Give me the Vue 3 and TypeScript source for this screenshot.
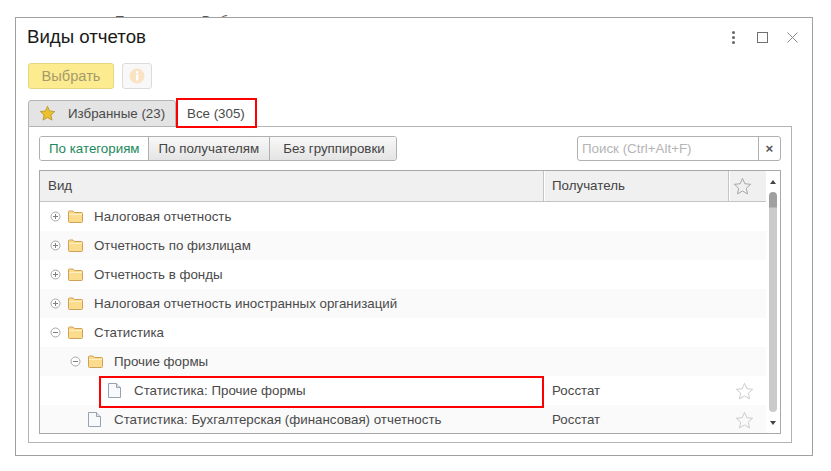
<script setup lang="ts">
type Row = {
  title: string
  level: number
  kind: 'closed' | 'open' | 'doc'
  recipient?: string
}

const rows: Row[] = [
  { title: 'Налоговая отчетность', level: 0, kind: 'closed' },
  { title: 'Отчетность по физлицам', level: 0, kind: 'closed' },
  { title: 'Отчетность в фонды', level: 0, kind: 'closed' },
  { title: 'Налоговая отчетность иностранных организаций', level: 0, kind: 'closed' },
  { title: 'Статистика', level: 0, kind: 'open' },
  { title: 'Прочие формы', level: 1, kind: 'open' },
  { title: 'Статистика: Прочие формы', level: 2, kind: 'doc', recipient: 'Росстат' },
  { title: 'Статистика: Бухгалтерская (финансовая) отчетность', level: 1, kind: 'doc', recipient: 'Росстат' },
]

const starPath = 'M10 1.5l2.5 5.6 6.1.6-4.6 4.1 1.3 6-5.3-3.1-5.3 3.1 1.3-6L1.400 7.700l6.100-.6z'
</script>

<template>
  <div class="page">
    <div class="behind">Показывать Выбрать</div>
    <div class="window">
      <div class="titlebar">
        <h1 class="title">Виды отчетов</h1>
        <div class="window-actions">
          <span class="dots"><i></i><i></i><i></i></span>
          <span class="maximize"></span>
          <svg class="close" width="11" height="11" viewBox="0 0 11 11">
            <path d="M.5.500l10 10M10.500.500l-10 10" stroke="#8a8a8a" fill="none" />
          </svg>
        </div>
      </div>

      <div class="toolbar">
        <button class="select-btn">Выбрать</button>
        <button class="info-btn">
          <svg width="16" height="16" viewBox="0 0 16 16">
            <circle cx="8" cy="8" r="7.500" fill="#fae3c3" />
            <rect x="7" y="3" width="2.400" height="2.400" fill="#fff" />
            <rect x="7" y="6.500" width="2.400" height="6" fill="#fff" />
          </svg>
        </button>
      </div>

      <div class="tabs">
        <div class="tab tab-fav">
          <svg width="17" height="17" viewBox="0 0 20 20">
            <path :d="starPath" fill="#eac02c" stroke="#b8952a" />
          </svg>
          <span>Избранные (23)</span>
        </div>
        <div class="tab tab-all">Все (305)</div>
      </div>

      <div class="panel">
        <div class="filters">
          <div class="group">
            <span class="seg seg-active">По категориям</span>
            <span class="seg">По получателям</span>
            <span class="seg seg-last">Без группировки</span>
          </div>
          <div class="search">
            <span class="search-text">Поиск (Ctrl+Alt+F)</span>
            <span class="search-clear">×</span>
          </div>
        </div>

        <div class="table">
          <div class="table-main">
            <div class="head">
              <div class="col-name head-cell head-text">Вид</div>
              <div class="col-recipient head-cell head-text">Получатель</div>
              <div class="col-star head-cell">
                <svg width="19" height="19" viewBox="0 0 20 20">
                  <path :d="starPath" fill="none" stroke="#a3a3a3" />
                </svg>
              </div>
            </div>
            <div
              v-for="(row, i) in rows"
              :key="row.title"
              class="row"
              :class="{ odd: i % 2 === 1 }"
            >
              <div class="col-name cell" :style="{ paddingLeft: `${10 + row.level * 20}px` }">
                <svg v-if="row.kind !== 'doc'" class="toggle" width="11" height="11" viewBox="0 0 11 11">
                  <circle cx="5.500" cy="5.500" r="4.500" fill="#fff" stroke="#a8a8a8" />
                  <path d="M3 5.500h5" stroke="#808080" />
                  <path v-if="row.kind === 'closed'" d="M5.500 3v5" stroke="#808080" />
                </svg>
                <svg v-if="row.kind !== 'doc'" class="folder" width="15" height="13" viewBox="0 0 15 13">
                  <path
                    d="M.5 11.500V2q0-1 1-1h3.500l1.500 1.500h7q1 0 1 1v8q0 1-1 1h-12q-1 0-1-1z"
                    fill="#fbdc8c"
                    stroke="#d0a05a"
                  />
                  <path d="M1 4.500h13" stroke="#fff0c4" />
                </svg>
                <svg v-else class="doc" width="13" height="15" viewBox="0 0 13 15">
                  <path d="M.5.500h8l4 4v10H.5z" fill="#f7f9fb" stroke="#97a2b0" />
                  <path d="M8.500.500v4h4" fill="#dfe4ea" stroke="#97a2b0" />
                </svg>
                <span class="row-title">{{ row.title }}</span>
              </div>
              <div class="col-recipient cell row-recipient">{{ row.recipient }}</div>
              <div class="col-star cell row-star">
                <svg v-if="row.recipient" width="19" height="19" viewBox="0 0 20 20">
                  <path :d="starPath" fill="none" stroke="#c8c8c8" />
                </svg>
              </div>
            </div>
            <div class="row-mark"></div>
          </div>
          <div class="scrollbar">
            <span class="arrow arrow-up"></span>
            <div class="track"><div class="thumb"></div></div>
            <span class="arrow arrow-down"></span>
          </div>
        </div>
      </div>

      <div class="tab-mark"></div>
    </div>
  </div>
</template>

<style scoped>
.page {
  position: relative;
  width: 831px;
  height: 471px;
  padding: 17px 0 0 15px;
  box-sizing: border-box;
  overflow: hidden;
  background: #fff;
  font-family: "Liberation Sans", Arial, sans-serif;
  font-size: 13.33px;
  color: #4a4a4a;
}

.behind {
  position: absolute;
  left: 115px;
  top: 13px;
  color: #555;
  word-spacing: 10px;
}

.window {
  position: relative;
  width: 798px;
  height: 439px;
  box-sizing: border-box;
  border: 1px solid #a0a0a0;
  background: #fff;
  padding: 0 21px 0 12px;
}

.titlebar {
  display: flex;
  align-items: center;
  justify-content: space-between;
  height: 38px;
  margin-left: -1px;
  margin-right: -7px;
}

.title {
  margin: 0;
  font-size: 18.67px;
  font-weight: 400;
  color: #1a1a1a;
}

.window-actions {
  display: flex;
  align-items: center;
}

.dots {
  display: flex;
  flex-direction: column;
  gap: 2px;
  margin-right: 22px;
}

.dots i {
  display: block;
  width: 3px;
  height: 3px;
  background: #666;
  border-radius: 50%;
}

.maximize {
  width: 9px;
  height: 9px;
  border: 1px solid #707070;
  margin-right: 19px;
}

.toolbar {
  display: flex;
  gap: 8px;
  margin-top: 7px;
}

.select-btn {
  width: 86px;
  height: 26px;
  padding: 0;
  border: 1px solid #e6d67e;
  border-radius: 3px;
  background: #fdeb8f;
  color: #a39b6c;
  font: inherit;
  font-size: 14.67px;
  font-weight: 400;
}

.info-btn {
  display: flex;
  align-items: center;
  justify-content: center;
  width: 30px;
  height: 26px;
  padding: 0;
  border: 1px solid #dcdcdc;
  border-radius: 3px;
  background: #f8f8f8;
}

.tabs {
  display: flex;
  height: 28px;
  margin-top: 10px;
  margin-bottom: -1px;
  position: relative;
  z-index: 1;
}

.tab {
  display: flex;
  align-items: center;
  box-sizing: border-box;
  height: 28px;
}

.tab-fav {
  gap: 12px;
  width: 148px;
  height: 27px;
  margin-top: 1px;
  padding-left: 10px;
  background: #e4e4e4;
  border: 1px solid #b4b4b4;
  border-radius: 3px 3px 0 0;
}

.tab-all {
  width: 81px;
  padding-left: 11px;
  background: #fff;
}

.panel {
  box-sizing: border-box;
  width: 764px;
  height: 317px;
  border: 1px solid #b4b4b4;
  padding: 9px 10px 0;
}

.filters {
  display: flex;
  justify-content: space-between;
  height: 25px;
}

.group {
  display: flex;
  box-sizing: border-box;
  height: 25px;
  border: 1px solid #b0b0b0;
  border-radius: 3px;
  overflow: hidden;
}

.seg {
  display: flex;
  align-items: center;
  padding: 0 10px;
  border-left: 1px solid #b0b0b0;
  background: linear-gradient(#f8f8f8, #e4e4e4);
  color: #444;
}

.seg:first-child {
  border-left: 0;
  padding: 0 8px 0 9px;
}

.seg-last {
  padding: 0 11px 0 13px;
}

.seg-active {
  background: #fff;
  color: #1b8a5a;
}

.search {
  display: flex;
  box-sizing: border-box;
  width: 204px;
  height: 25px;
  border: 1px solid #b0b0b0;
  border-radius: 3px;
}

.search-text {
  flex: 1;
  display: flex;
  align-items: center;
  padding-left: 4px;
  color: #b4b4b4;
}

.search-clear {
  display: flex;
  align-items: center;
  justify-content: center;
  width: 21px;
  border-left: 1px solid #b0b0b0;
  color: #555;
  font-weight: 700;
}

.table {
  display: flex;
  box-sizing: border-box;
  width: 742px;
  height: 264px;
  margin-top: 9px;
  border: 1px solid #a8a8a8;
}

.table-main {
  position: relative;
  flex: 1;
  min-width: 0;
  overflow: hidden;
}

.head {
  display: flex;
  height: 31px;
  box-sizing: border-box;
  border-bottom: 1px solid #c4c4c4;
}

.head-cell {
  background: #f0f0f0;
  color: #444;
}

.row {
  display: flex;
  height: 29px;
}

.row.odd {
  background: #fafafa;
}

.col-name,
.col-recipient,
.col-star {
  display: flex;
  align-items: center;
  box-sizing: border-box;
}

.col-name {
  width: 504px;
  padding-left: 8px;
}

.col-recipient {
  width: 185px;
  padding-left: 7px;
}

.head-text {
  padding-bottom: 2px;
}

.row-recipient {
  padding-left: 8px;
}

.col-star {
  flex: 1;
  padding-left: 3px;
}

.row-star {
  padding-left: 6px;
  padding-top: 2px;
}

.head .col-recipient,
.head .col-star {
  border-left: 1px solid #fff;
  box-shadow: -1px 0 #c4c4c4;
}

.toggle {
  flex: none;
}

.folder {
  flex: none;
  margin-left: 7px;
  margin-right: 11px;
}

.doc {
  flex: none;
  margin-left: 18px;
  margin-right: 13px;
}

.row-title {
  white-space: nowrap;
}

.row-mark {
  position: absolute;
  left: 59px;
  top: 205px;
  box-sizing: border-box;
  width: 445px;
  height: 32px;
  border: 2px solid #f00;
}

.tab-mark {
  position: absolute;
  left: 160px;
  top: 80px;
  box-sizing: border-box;
  width: 81px;
  height: 30px;
  border: 2px solid #f00;
  z-index: 2;
}

.scrollbar {
  display: flex;
  flex-direction: column;
  align-items: center;
  width: 14px;
  padding: 9px 0 8px;
  box-sizing: border-box;
  background: #fff;
}

.track {
  flex: 1;
  width: 8px;
  margin: 8px 0 9px;
}

.thumb {
  height: 100%;
  background: linear-gradient(#a0a0a0 0, #a0a0a0 15px, #cacaca 16px);
  border-radius: 4px;
}

.arrow {
  width: 0;
  height: 0;
  border-left: 3px solid transparent;
  border-right: 3px solid transparent;
}

.arrow-up {
  border-bottom: 4px solid #444;
}

.arrow-down {
  border-top: 4px solid #444;
}
</style>
